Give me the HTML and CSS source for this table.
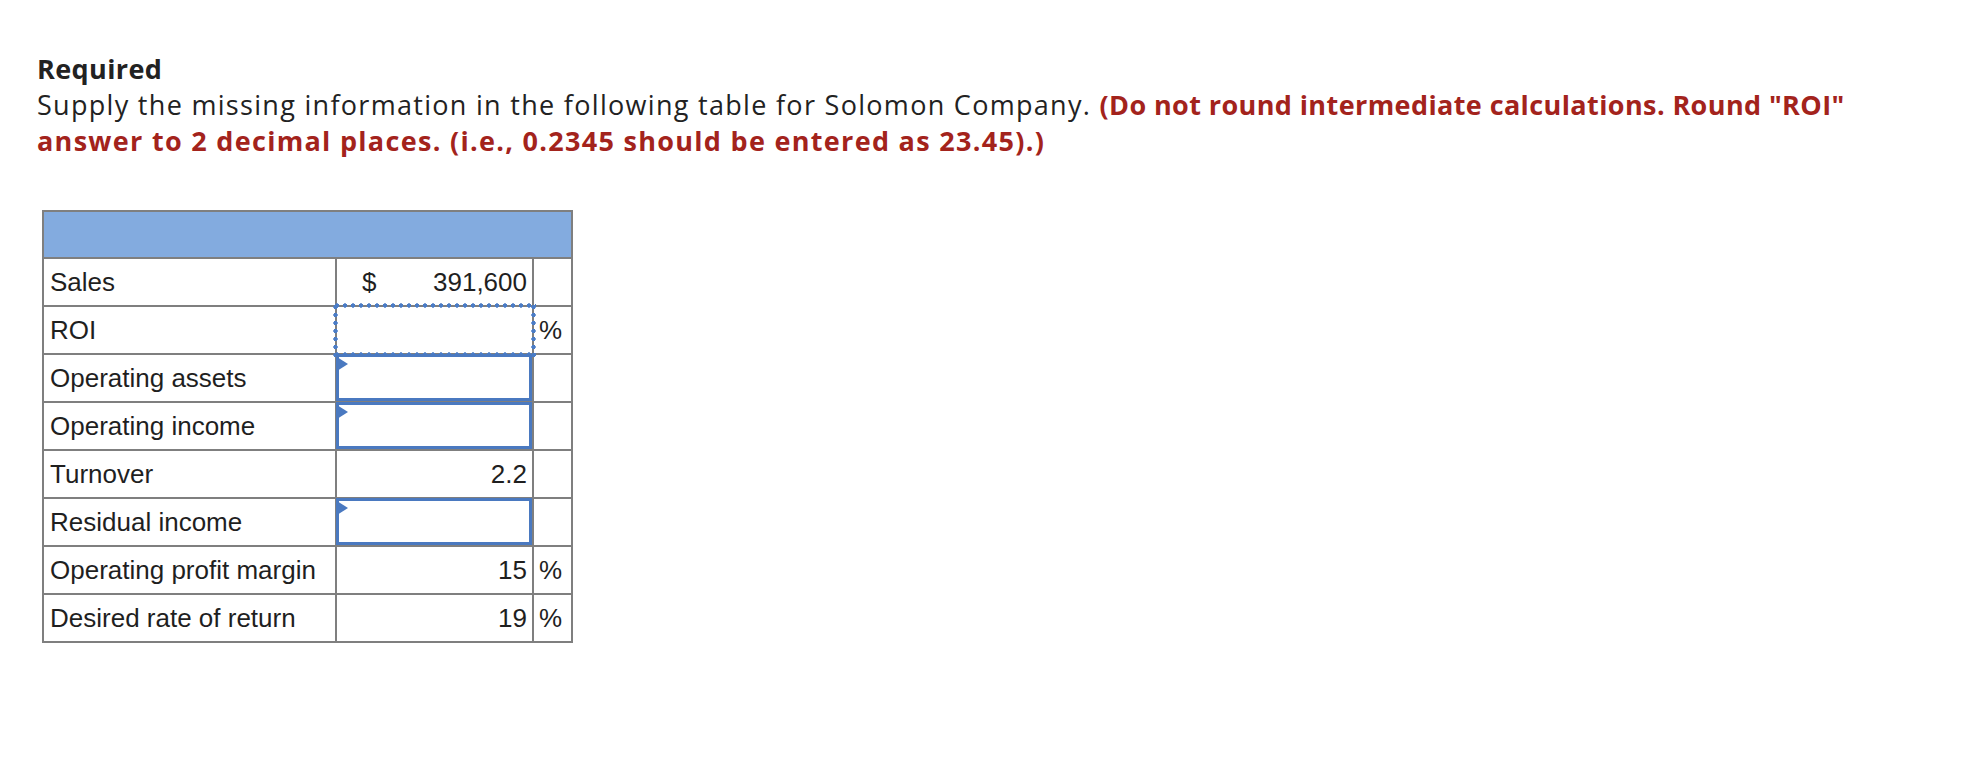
FILE: index.html
```html
<!DOCTYPE html>
<html>
<head>
<meta charset="utf-8">
<link rel="stylesheet" href="styles.css">
</head>
<body>
<div class="page">
  <div class="intro">
    <div class="req">Required</div>
    <div class="instr">Supply the missing information in the following table for Solomon Company. <strong class="warn">(Do not round intermediate calculations. Round "ROI" <span class="wide">answer to 2 decimal places. (i.e., 0.2345 should be entered as 23.45).)</span></strong></div>
  </div>
  <table class="grid">
    <colgroup>
      <col class="c1"><col class="c2"><col class="c3">
    </colgroup>
    <tr class="head"><td colspan="3"></td></tr>
    <tr><td class="lbl">Sales</td><td class="val"><span class="dollar">$</span><span>391,600</span></td><td class="unit"></td></tr>
    <tr><td class="lbl">ROI</td><td class="val focus"></td><td class="unit">%</td></tr>
    <tr><td class="lbl">Operating assets</td><td class="val inp"><div class="box"></div></td><td class="unit"></td></tr>
    <tr><td class="lbl">Operating income</td><td class="val inp"><div class="box"></div></td><td class="unit"></td></tr>
    <tr><td class="lbl">Turnover</td><td class="val"><span></span><span>2.2</span></td><td class="unit"></td></tr>
    <tr><td class="lbl">Residual income</td><td class="val inp"><div class="box"></div></td><td class="unit"></td></tr>
    <tr><td class="lbl">Operating profit margin</td><td class="val"><span></span><span>15</span></td><td class="unit">%</td></tr>
    <tr><td class="lbl">Desired rate of return</td><td class="val"><span></span><span>19</span></td><td class="unit">%</td></tr>
  </table>
</div>
</body>
</html>
```
FILE: styles.css
```css
html, body {
  margin: 0;
  padding: 0;
  background: #ffffff;
}
.page {
  padding: 51px 0 0 37px;
}
.intro {
  font-family: "Open Sans", Lato, sans-serif;
  font-size: 27px;
  line-height: 36px;
  letter-spacing: 1.3px;
  color: #222222;
  max-width: 1900px;
}
.req {
  font-weight: 700;
  letter-spacing: 0.4px;
}
.warn {
  font-weight: 700;
  letter-spacing: 0.4px;
  color: #a3231c;
}
.wide {
  letter-spacing: 1.3px;
}
.grid {
  margin: 51px 0 0 5px;
  border-collapse: collapse;
  table-layout: fixed;
  width: 529px;
  font-family: "Liberation Sans", Arial, sans-serif;
  font-size: 26px;
  color: #1f1f1f;
}
.c1 { width: 293px; }
.c2 { width: 197px; }
.c3 { width: 39px; }
.grid td {
  border: 2px solid #7f7f7f;
  height: 46px;
  padding: 0;
}
.head td {
  background: #83abdf;
  height: 45px;
}
.lbl {
  padding-left: 6px !important;
}
.val {
  position: relative;
}
.val span:last-child {
  float: right;
  margin-right: 5px;
}
.dollar {
  float: left;
  margin-left: 25px;
}
.unit {
  padding-left: 5px !important;
}
.focus::after {
  content: "";
  position: absolute;
  left: -4px;
  top: -4px;
  right: -4px;
  bottom: -4px;
  background:
    radial-gradient(circle, #4a7cc6 1.9px, rgba(74,124,198,0) 2.5px) left top / 8px 5px repeat-x,
    radial-gradient(circle, #4a7cc6 1.9px, rgba(74,124,198,0) 2.5px) left bottom / 8px 5px repeat-x,
    radial-gradient(circle, #4a7cc6 1.9px, rgba(74,124,198,0) 2.5px) left top / 5px 8px repeat-y,
    radial-gradient(circle, #4a7cc6 1.9px, rgba(74,124,198,0) 2.5px) right top / 5px 8px repeat-y;
}
.inp {
  padding: 0 !important;
}
.box {
  position: absolute;
  left: -1px;
  top: -1px;
  right: 0;
  bottom: 0;
  border: 3px solid #4a79c0;
}
.box::before {
  content: "";
  position: absolute;
  left: -2px;
  top: 0;
  width: 0;
  height: 0;
  border-top: 7px solid transparent;
  border-bottom: 7px solid transparent;
  border-left: 11px solid #4a79c0;
}
```
